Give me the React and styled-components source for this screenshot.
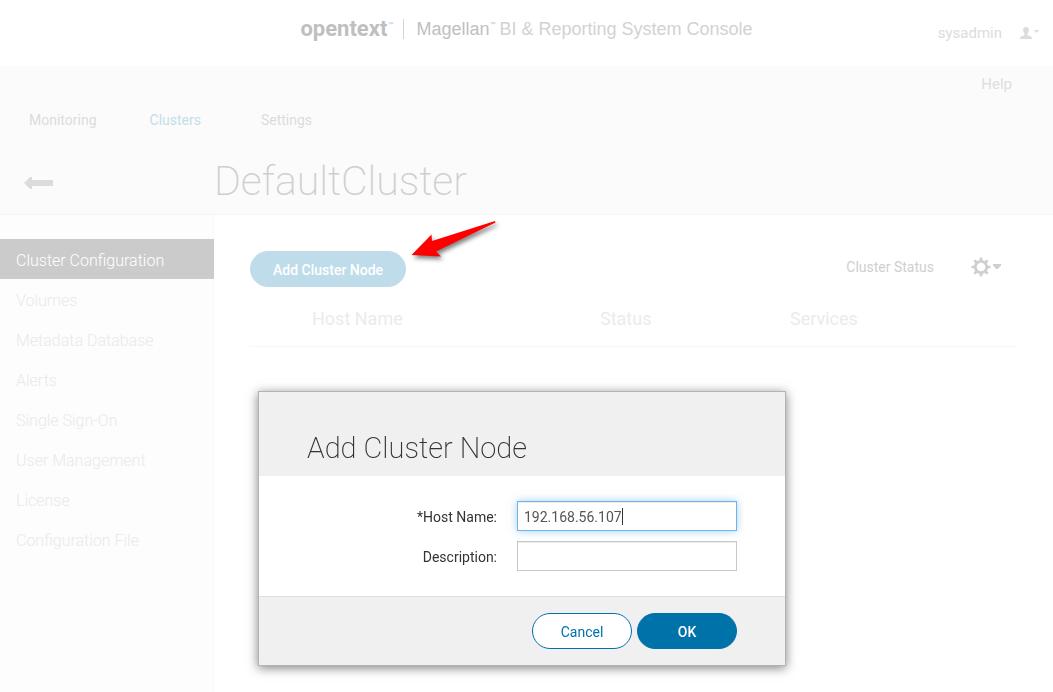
import React, { useState } from 'react';
import styled, { createGlobalStyle } from 'styled-components';

const GlobalStyle = createGlobalStyle`
  *, *::before, *::after { box-sizing: border-box; }
  body {
    margin: 0;
    background: #fff;
    color: #333;
    font-family: Roboto, "Liberation Sans", sans-serif;
    font-size: 14px;
    line-height: 20px;
  }
  button, input { font: inherit; }
`;

const Page = styled.div`
  display: flex;
  flex-direction: column;
  min-height: 100vh;
`;

const TopBar = styled.header`
  display: grid;
  grid-template-columns: 1fr auto 1fr;
  align-items: center;
  height: 66px;
  padding: 0 14px;
`;

const Brand = styled.div`
  grid-column: 2;
  display: flex;
  align-items: center;
  margin-bottom: 8px;
  font-family: "Liberation Sans", Arial, sans-serif;
  white-space: nowrap;
`;

const BrandName = styled.span`
  color: #bfbfbf;
  font-family: Roboto, "Liberation Sans", sans-serif;
  font-size: 22px;
  font-weight: 700;
  line-height: 24px;
`;

const Trademark = styled.sup`
  align-self: flex-start;
  color: #bfbfbf;
  font-size: 6px;
  line-height: 14px;
`;

const BrandDivider = styled.span`
  width: 1px;
  height: 20px;
  margin: 0 12px 0 10px;
  background: #d4d4d4;
`;

const Product = styled.span`
  color: ${({ $strong }) => ($strong ? '#c0c0c0' : '#d2d2d2')};
  font-size: 18px;
  line-height: 24px;
  margin-left: ${({ $strong }) => ($strong ? 0 : '4px')};
`;

const UserMenu = styled.button`
  grid-column: 3;
  justify-self: end;
  display: flex;
  align-items: center;
  padding: 0;
  border: 0;
  background: none;
  color: #dcdcdc;
  font-size: 15px;

  svg { display: block; }
  svg:first-of-type { margin-left: 18px; }
  svg:last-of-type { margin: 0 0 4px 2px; }
`;

const ClusterBand = styled.section`
  height: 149px;
  padding: 8px 0 0;
  border-bottom: 1px solid #f4f4f4;
  background: #fbfbfb;
`;

const HelpRow = styled.div`
  display: flex;
  justify-content: flex-end;
  padding-right: 41px;
`;

const HelpLink = styled.a`
  color: #dedede;
  font-size: 15px;
  text-decoration: none;
`;

const Nav = styled.nav`
  display: flex;
  padding: 16px 0 0 29px;
`;

const NavLink = styled.a`
  margin-right: ${({ $wide }) => ($wide ? '60px' : '53px')};
  color: ${({ $active }) => ($active ? '#c2deeb' : '#dcdcdc')};
  text-decoration: none;
`;

const TitleRow = styled.div`
  display: grid;
  grid-template-columns: 190px 1fr;
  align-items: center;
  padding: 27px 24px 0;
`;

const BackLink = styled.a`
  display: block;
  padding-top: 4px;
  svg { display: block; }
`;

const Title = styled.h1`
  margin: 0;
  color: #cfcfcf;
  font-size: 41px;
  font-weight: 200;
  line-height: 48px;
`;

const Columns = styled.div`
  flex: 1;
  display: grid;
  grid-template-columns: 214px 1fr;
`;

const Sidebar = styled.nav`
  padding-top: 24px;
  border-right: 1px solid #f9f9f9;
  background: #fdfdfd;
`;

const SideLink = styled.a`
  display: block;
  margin-right: -1px;
  padding: 4px 16px 0;
  background: ${({ $active }) => ($active ? '#cbcbcb' : 'transparent')};
  color: ${({ $active }) => ($active ? '#fff' : '#e9e9e9')};
  font-size: 16px;
  font-weight: 300;
  line-height: 36px;
  text-decoration: none;
`;

const Main = styled.main`
  padding: 36px 37px 0 36px;
`;

const Toolbar = styled.div`
  display: flex;
  align-items: flex-start;
  justify-content: space-between;
`;

const AddArea = styled.div`
  position: relative;
`;

const PillButton = styled.button`
  min-width: 100px;
  height: 36px;
  padding: 1px 22px 0;
  border: 1px solid ${({ $edge }) => $edge};
  border-radius: 18px;
  background: ${({ $fill }) => $fill};
  color: ${({ $ink }) => $ink};
  font-weight: ${({ $medium }) => ($medium ? 500 : 400)};
`;

const Pointer = styled.svg`
  position: absolute;
  left: 100%;
  top: -36px;
  overflow: visible;
  filter: drop-shadow(2px 3px 2px rgba(0, 0, 0, 0.5));
`;

const StatusArea = styled.div`
  display: flex;
  align-items: center;
  gap: 37px;
  padding: 6px 15px 0 0;
  color: #cfcfcf;
`;

const GearButton = styled.button`
  display: flex;
  align-items: center;
  gap: 2px;
  padding: 0;
  border: 0;
  background: none;
  svg { display: block; }
`;

const NodeTable = styled.table`
  width: 100%;
  margin-top: 13px;
  border-bottom: 1px solid #f7f7f7;
  border-collapse: collapse;
  table-layout: fixed;
`;

const HeadCell = styled.th`
  width: ${({ $width }) => $width};
  padding: 8px 0 16px ${({ $inset }) => ($inset ? '62px' : 0)};
  color: #ebebeb;
  font-size: 18px;
  font-weight: 400;
  line-height: 22px;
  text-align: left;
`;

const Overlay = styled.div`
  position: fixed;
  inset: 0;
  display: flex;
  align-items: flex-start;
  justify-content: center;
  padding: 391px 9px 0 0;
`;

const Dialog = styled.form`
  width: 528px;
  border: 1px solid #b3b3b3;
  background: #fff;
  box-shadow: 0 2px 10px rgba(0, 0, 0, 0.5);
`;

const DialogTitle = styled.h2`
  margin: 0;
  padding: 38px 48px 10px;
  background: #f0f0f0;
  color: #333;
  font-size: 29px;
  font-weight: 200;
  line-height: 36px;
`;

const Fields = styled.div`
  display: grid;
  grid-template-columns: 1fr 220px;
  gap: 10px 20px;
  align-items: center;
  padding: 25px 48px;
`;

const Label = styled.label`
  padding-top: 2px;
  color: #333;
  text-align: right;
`;

const Field = styled.div`
  position: relative;
`;

const TextInput = styled.input`
  display: block;
  width: 100%;
  height: 30px;
  padding: 2px 6px 0;
  border: 1px solid #c8c8c8;
  border-radius: 0;
  outline: none;
  background: #fff;
  box-shadow: inset 0 1px 1px rgba(0, 0, 0, 0.07);
  color: #555;
  caret-color: transparent;

  &:focus {
    border-color: #6fb3ec;
    box-shadow: inset 0 1px 1px rgba(0, 0, 0, 0.07), 0 0 8px rgba(102, 175, 233, 0.6);
  }
`;

const CaretTrack = styled.div`
  position: absolute;
  inset: 7px auto 6px 7px;
  border-right: 1px solid #333;
  line-height: 17px;
  pointer-events: none;

  &::before {
    content: "${({ $value }) => $value}";
    visibility: hidden;
  }
`;

const DialogFooter = styled.footer`
  display: flex;
  justify-content: flex-end;
  gap: 5px;
  padding: 16px 48px;
  border-top: 1px solid #e0e0e0;
  background: #f0f0f0;
`;

const sideItems = [
  'Cluster Configuration',
  'Volumes',
  'Metadata Database',
  'Alerts',
  'Single Sign-On',
  'User Management',
  'License',
  'Configuration File',
];

const teeth = [0, 45, 90, 135, 180, 225, 270, 315];

function Gear() {
  return (
    <svg width="20" height="20" viewBox="0 0 20 20" aria-hidden="true">
      <circle cx="10" cy="10" r="5.7" fill="none" stroke="#cfcfcf" strokeWidth="2.8" />
      {teeth.map((angle) => (
        <path key={angle} d="M8.300 4 L8.900 0.400 H11.100 L11.700 4 Z" fill="#cfcfcf" transform={`rotate(${angle} 10 10)`} />
      ))}
    </svg>
  );
}

export default function App() {
  const [host, setHost] = useState('192.168.56.107');
  const [description, setDescription] = useState('');

  return (
    <>
      <GlobalStyle />
      <Page>
        <TopBar>
          <Brand>
            <BrandName>opentext</BrandName>
            <Trademark>™</Trademark>
            <BrandDivider />
            <Product $strong>Magellan</Product>
            <Trademark>™</Trademark>
            <Product>BI &amp; Reporting System Console</Product>
          </Brand>
          <UserMenu type="button">
            sysadmin
            <svg width="12" height="12" viewBox="0 0 12 12" fill="#dcdcdc" aria-hidden="true">
              <path d="M6 0 C4 0 3 1.2 3.2 3.2 C3.3 5 4 6 4.6 6.8 V8 C3.6 8.9 0.8 9 0.3 10.3 L0 12 H12 L11.7 10.3 C11.2 9 8.4 8.9 7.4 8 V6.8 C8 6 8.7 5 8.8 3.2 C9 1.2 8 0 6 0 Z" />
            </svg>
            <svg width="5" height="3" viewBox="0 0 5 3" fill="#dcdcdc" aria-hidden="true">
              <path d="M0 0 H5 L2.5 3 Z" />
            </svg>
          </UserMenu>
        </TopBar>

        <ClusterBand>
          <HelpRow>
            <HelpLink href="#help">Help</HelpLink>
          </HelpRow>
          <Nav aria-label="Sections">
            <NavLink href="#monitoring">Monitoring</NavLink>
            <NavLink href="#clusters" $active $wide>Clusters</NavLink>
            <NavLink href="#settings">Settings</NavLink>
          </Nav>
          <TitleRow>
            <BackLink href="#back" aria-label="Back">
              <svg width="29" height="12" viewBox="0 0 29 12" fill="#dcdcdc" aria-hidden="true">
                <path d="M0 6 L6 0 H8 V3 H29 V9 H8 V12 H6 Z" />
              </svg>
            </BackLink>
            <Title>DefaultCluster</Title>
          </TitleRow>
        </ClusterBand>

        <Columns>
          <Sidebar aria-label="Cluster">
            {sideItems.map((item, index) => (
              <SideLink key={item} href="#cluster" $active={index === 0}>{item}</SideLink>
            ))}
          </Sidebar>
          <Main>
            <Toolbar>
              <AddArea>
                <PillButton type="button" $fill="#bfdcea" $edge="#bfdcea" $ink="#fff" $medium>
                  Add Cluster Node
                </PillButton>
                <Pointer width="90" height="46" viewBox="0 0 90 46" aria-hidden="true">
                  <path d="M5.500 40 L25.500 19.500 L26 26 L89 6 L89.500 7.500 L30 36.500 L35 41.500 Z" fill="#f00" />
                </Pointer>
              </AddArea>
              <StatusArea>
                <span>Cluster Status</span>
                <GearButton type="button" aria-label="Cluster actions">
                  <Gear />
                  <svg width="8" height="6" viewBox="0 0 8 6" fill="#cfcfcf" aria-hidden="true">
                    <path d="M0 0 H8 V1.500 L4.800 5 H3.200 L0 1.500 Z" />
                  </svg>
                </GearButton>
              </StatusArea>
            </Toolbar>
            <NodeTable>
              <thead>
                <tr>
                  <HeadCell $width="350px" $inset>Host Name</HeadCell>
                  <HeadCell $width="190px">Status</HeadCell>
                  <HeadCell $width="auto">Services</HeadCell>
                </tr>
              </thead>
            </NodeTable>
          </Main>
        </Columns>
      </Page>

      <Overlay>
        <Dialog role="dialog" aria-labelledby="dialog-title" onSubmit={(e) => e.preventDefault()}>
          <DialogTitle id="dialog-title">Add Cluster Node</DialogTitle>
          <Fields>
            <Label htmlFor="host">*Host Name:</Label>
            <Field>
              <TextInput id="host" autoFocus value={host} onChange={(e) => setHost(e.target.value)} />
              <CaretTrack $value={host} />
            </Field>
            <Label htmlFor="description">Description:</Label>
            <TextInput id="description" value={description} onChange={(e) => setDescription(e.target.value)} />
          </Fields>
          <DialogFooter>
            <PillButton type="button" $fill="#fff" $edge="#0072aa" $ink="#0072aa">Cancel</PillButton>
            <PillButton type="submit" $fill="#0072aa" $edge="#0072aa" $ink="#fff" $medium>OK</PillButton>
          </DialogFooter>
        </Dialog>
      </Overlay>
    </>
  );
}
